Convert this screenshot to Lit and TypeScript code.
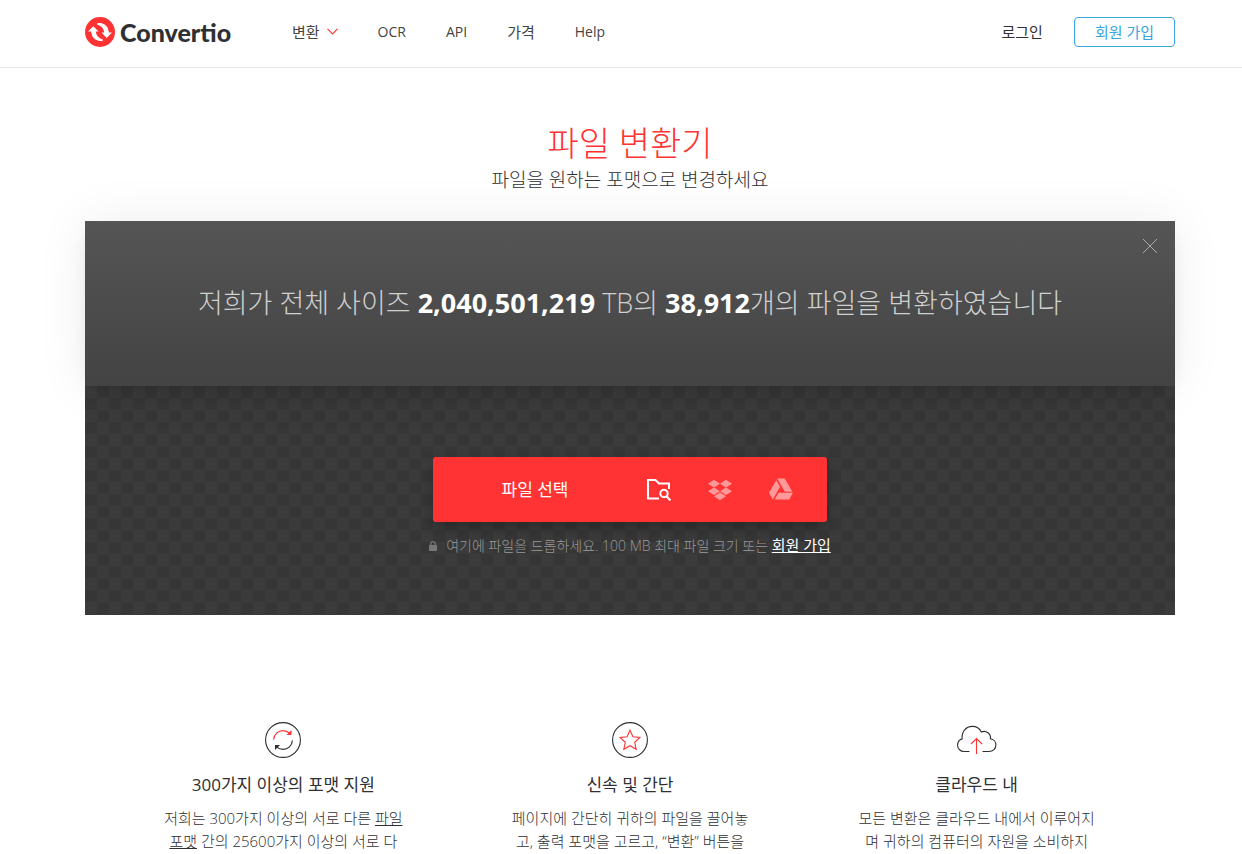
import { LitElement, html, svg, css } from "lit";
import { customElement } from "lit/decorators.js";

const logoMark = html`<svg class="mark" viewBox="0 0 30 30" aria-hidden="true">
  <circle cx="15" cy="15" r="15" fill="#ff3333" />
  <path fill="#fff" d="M3 14.6 8.3 9.3l5.2 5.3h-2.700c.2 3.400 2.200 6.300 5.800 7.600C11.200 22.900 6.700 19.600 6 14.600Z" />
  <path fill="#fff" d="M27 15.500 21.700 20.900l-5.200-5.400h2.700c-.2-3.400-2.200-6.300-5.800-7.600C18.800 7.100 23.300 10.500 24 15.500Z" />
  <path fill="#fff" d="M12.200 6.200c5-.9 9.300 1.700 11 5.600l-2.600 1.200c-1.300-2.900-4.300-5.200-8.400-5.300ZM17.800 23.800c-5 .9-9.300-1.700-11-5.600l2.600-1.200c1.300 2.900 4.300 5.200 8.400 5.300Z" />
</svg>`;

const chevron = html`<svg class="chevron" viewBox="0 0 11 7" aria-hidden="true">
  <path d="M.5.800 5.500 5.800l5-5" fill="none" stroke="#ff3333" stroke-width="1.200" />
</svg>`;

const circle = svg`<circle cx="18" cy="18" r="17.400" fill="none" stroke="#2f3033" stroke-width="1.100" />`;

const convertIcon = html`<svg width="36" height="36" viewBox="0 0 36 36" aria-hidden="true">
  ${circle}
  <path d="M8.600 17.500C9 12.300 13 8.600 18 8.600c2.700 0 5 1 6.700 2.700" fill="none" stroke="#ff3333" stroke-width="1.200" />
  <path d="M26.500 8v5h-5Z" fill="#ff3333" />
  <path d="M27.400 18.500C27 23.700 23 27.400 18 27.400c-2.700 0-5-1-6.700-2.700" fill="none" stroke="#2f3033" stroke-width="1.200" />
  <path d="M10 28v-5h5Z" fill="#2f3033" />
</svg>`;

const starIcon = html`<svg width="36" height="36" viewBox="0 0 36 36" aria-hidden="true">
  ${circle}
  <path d="m18 8.200 2.900 6.500 7 .8-5.200 4.800 1.500 7L18 23.700l-6.200 3.600 1.500-7-5.200-4.800 7-.8Z" fill="none" stroke="#ff3333" stroke-width="1.100" />
</svg>`;

const cloudIcon = html`<svg width="40" height="36" viewBox="0.500 2 40 36" aria-hidden="true">
  <path d="M13 31.500H7.500A6.300 6.300 0 0 1 1.100 25.400c0-3.200 1.700-5.700 4.500-6.500C5 11.700 9.500 6.400 15.800 6.400c4.100 0 7.400 2.200 9 5.600 4.900-2.200 9.900 2 9.100 6.700 3.100.5 5.500 3.100 5.500 6.300 0 3.700-2.900 6.500-6.900 6.500H26" fill="none" stroke="#2f3033" stroke-width="1.100" />
  <path d="M20 34V18.500M14.500 24l5.500-5.500L25.500 24" fill="none" stroke="#ff3333" stroke-width="1.100" />
</svg>`;

const folderIcon = html`<svg width="24" height="24" viewBox="0 0 24 24" aria-hidden="true">
  <path d="M12 20.500H1V2h7.500l3.500 3.500h10V11" fill="none" stroke="#fff" stroke-width="2" />
  <circle cx="17" cy="15.500" r="3.700" fill="none" stroke="#fff" stroke-width="2" />
  <path d="m19.500 18.200 4 4.300" stroke="#fff" stroke-width="2" />
</svg>`;

const dropboxIcon = html`<svg width="24" height="24" viewBox="0 0 24 24" aria-hidden="true">
  <path fill="#ff9999" d="M6 1.807L0 5.629l6 3.822 6.001-3.822L6 1.807zM18 1.807l-6 3.822 6 3.822 6-3.822-6-3.822zM0 13.274l6 3.822 6.001-3.822L6 9.452l-6 3.822zM18 9.452l-6 3.822 6 3.822 6-3.822-6-3.822zM6 18.371l6.001 3.822 6-3.822-6-3.822L6 18.371z" />
</svg>`;

const driveIcon = html`<svg width="24" height="24" viewBox="0 1 24 24" aria-hidden="true">
  <path fill="#ff9999" d="M12.01 1.485c-2.082 0-3.754.02-3.743.047.01.02 1.708 3.001 3.774 6.62l3.76 6.574h3.76c2.081 0 3.753-.02 3.742-.047-.005-.02-1.708-3.001-3.775-6.62l-3.76-6.574zm-4.76 1.73a789.828 789.861 0 0 0-3.63 6.319L0 15.868l1.89 3.298 1.885 3.297 3.62-6.335 3.618-6.33-1.88-3.287C8.1 4.704 7.255 3.22 7.25 3.214zm2.259 12.653-.203.348c-.114.198-.96 1.672-1.88 3.287a423.93 423.948 0 0 1-1.698 2.97c-.01.026 3.24.042 7.222.042h7.244l1.796-3.157c.992-1.734 1.85-3.23 1.906-3.323l.104-.167h-7.249z" />
</svg>`;

const lockIcon = html`<svg width="8" height="10" viewBox="0 0 8 10" aria-hidden="true">
  <path d="M1.800 5V2.800a2.200 2.200 0 0 1 4.400 0V5" fill="none" stroke="#777" stroke-width="1.200" />
  <rect y="4" width="8" height="6" rx=".6" fill="#777" />
</svg>`;

const features = [
  {
    icon: convertIcon,
    title: "300가지 이상의 포맷 지원",
    text: html`저희는 300가지 이상의 서로 다른 <a href="#formats">파일 포맷</a> 간의 25600가지 이상의 서로 다`,
  },
  {
    icon: starIcon,
    title: "신속 및 간단",
    text: html`페이지에 간단히 귀하의 파일을 끌어놓고, 출력 포맷을 고르고, “변환” 버튼을`,
  },
  {
    icon: cloudIcon,
    title: "클라우드 내",
    text: html`모든 변환은 클라우드 내에서 이루어지며 귀하의 컴퓨터의 자원을 소비하지`,
  },
];

@customElement("app-root")
export class AppRoot extends LitElement {
  static styles = css`
    :host {
      display: block;
      background: #fff;
      color: #2f3033;
      font-family: "Open Sans", "Noto Sans CJK KR", sans-serif;
      font-size: 14px;
      line-height: 20px;
    }
    * {
      box-sizing: border-box;
    }
    a {
      color: inherit;
      text-decoration: none;
    }
    button {
      margin: 0;
      padding: 0;
      border: 0;
      background: none;
      color: inherit;
      font: inherit;
      cursor: pointer;
    }
    svg {
      display: block;
    }
    .header {
      display: flex;
      align-items: center;
      padding: 0 67px 4px 85px;
      height: 68px;
      border-bottom: 1px solid #e7e7e7;
    }
    .logo {
      display: flex;
      align-items: center;
      gap: 5px;
      width: 207px;
      font: 900 25px/30px Lato, sans-serif;
    }
    .mark {
      width: 30px;
      height: 30px;
    }
    .nav {
      display: flex;
      flex: 1;
      gap: 40px;
      color: #444;
    }
    .hangul {
      font-size: 15px;
    }
    .menu {
      display: flex;
      align-items: center;
      gap: 7px;
    }
    .chevron {
      width: 11px;
      height: 7px;
    }
    .account {
      display: flex;
      align-items: center;
      gap: 31px;
      font-size: 15px;
    }
    .signup {
      padding: 4px 20px;
      border: 1px solid #3aa4dc;
      border-radius: 4px;
      color: #3aa4dc;
    }
    .main {
      padding: 54px 67px 0 85px;
    }
    .title {
      margin: 0;
      color: #ff3333;
      font-size: 34px;
      line-height: 42px;
      font-weight: 300;
      text-align: center;
    }
    .subtitle {
      margin: 0 0 25px;
      font-size: 19px;
      line-height: 32px;
      font-weight: 300;
      text-align: center;
    }
    .stats {
      position: relative;
      padding: 62px 60px 63px;
      background: linear-gradient(#555, #434343);
      box-shadow: 0 0 50px rgba(0, 0, 0, 0.07), 0 10px 20px -10px rgba(0, 0, 0, 0.2);
      color: #d0d0d0;
      font-size: 27px;
      line-height: 40px;
      font-weight: 300;
      text-align: center;
    }
    .stats p {
      margin: 0;
    }
    .stats strong {
      color: #fff;
      font-weight: 700;
    }
    .close {
      position: absolute;
      top: 17px;
      right: 17px;
      padding: 0;
    }
    .drop {
      display: flex;
      flex-direction: column;
      align-items: center;
      gap: 13px;
      padding: 71px 0 59px;
      background: conic-gradient(#363636 25%, #3b3b3b 25% 50%, #363636 50% 75%, #3b3b3b 75%) 0 0 / 24px 24px;
    }
    .picker {
      display: flex;
      align-items: center;
      padding-right: 34px;
      height: 65px;
      border-radius: 3px;
      background: #ff3333;
      box-shadow: 0 6px 14px rgba(0, 0, 0, 0.25);
      color: #fff;
    }
    .choose {
      width: 204px;
      height: 65px;
      font-size: 17px;
    }
    .sources {
      display: flex;
      gap: 37px;
      padding-left: 10px;
    }
    .hint {
      display: flex;
      align-items: center;
      gap: 9px;
      margin: 0;
      color: #999;
      font-weight: 300;
    }
    .hint a {
      color: #fff;
      font-size: 15px;
      font-weight: 400;
      text-decoration: underline;
    }
    .features {
      display: grid;
      grid-template-columns: repeat(3, 1fr);
      margin: 107px 25px 0;
    }
    .feature {
      display: flex;
      flex-direction: column;
      align-items: center;
      padding: 0 50px;
      text-align: center;
    }
    .feature h2 {
      margin: 15px 0 10px;
      font-size: 17px;
      line-height: 24px;
      font-weight: 400;
    }
    .feature p {
      margin: 0;
      font-size: 15px;
      line-height: 23px;
      font-weight: 300;
    }
    .feature a {
      text-decoration: underline;
    }
  `;

  render() {
    return html`
      <header class="header">
        <a class="logo" href="#home">${logoMark}<span>Convertio</span></a>
        <nav class="nav">
          <button class="menu hangul" type="button">변환 ${chevron}</button>
          <a href="#ocr">OCR</a>
          <a href="#api">API</a>
          <a class="hangul" href="#pricing">가격</a>
          <a href="#help">Help</a>
        </nav>
        <div class="account">
          <a href="#login">로그인</a>
          <a class="signup" href="#signup">회원 가입</a>
        </div>
      </header>
      <main class="main">
        <h1 class="title">파일 변환기</h1>
        <p class="subtitle">파일을 원하는 포맷으로 변경하세요</p>
        <section class="stats">
          <p>저희가 전체 사이즈 <strong>2,040,501,219</strong> TB의 <strong>38,912</strong>개의 파일을 변환하였습니다</p>
          <button class="close" type="button" aria-label="닫기">
            <svg width="16" height="16" viewBox="0 0 16 16" aria-hidden="true">
              <path d="m1 1 14 14M15 1 1 15" stroke="#aaa" />
            </svg>
          </button>
        </section>
        <section class="drop">
          <div class="picker">
            <button class="choose" type="button">파일 선택</button>
            <div class="sources">
              <button type="button" aria-label="내 컴퓨터">${folderIcon}</button>
              <button type="button" aria-label="Dropbox">${dropboxIcon}</button>
              <button type="button" aria-label="Google Drive">${driveIcon}</button>
            </div>
          </div>
          <p class="hint">
            ${lockIcon}
            <span>여기에 파일을 드롭하세요. 100 MB 최대 파일 크기 또는 <a href="#signup">회원 가입</a></span>
          </p>
        </section>
        <section class="features">
          ${features.map(
            (f) => html`<article class="feature">
              ${f.icon}
              <h2>${f.title}</h2>
              <p>${f.text}</p>
            </article>`
          )}
        </section>
      </main>
    `;
  }
}
